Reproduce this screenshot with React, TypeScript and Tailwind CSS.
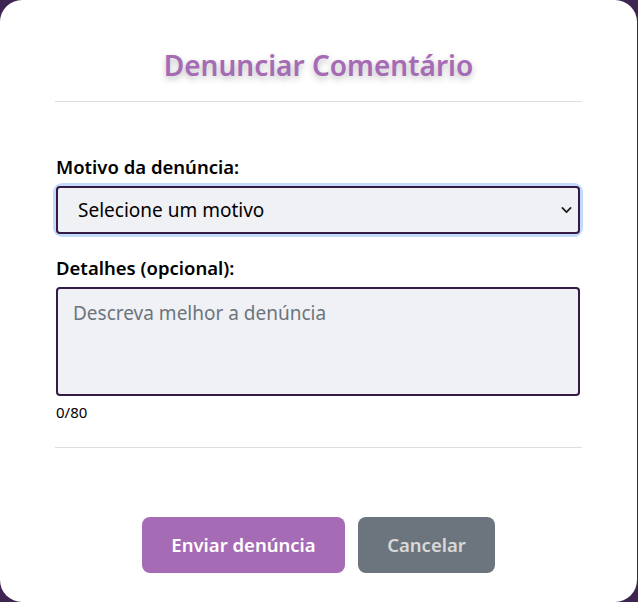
import React, { useState } from 'react';

const FONT = "font-['Segoe_UI','Noto_Sans','Open_Sans',sans-serif]";

export default function App() {
  const [details, setDetails] = useState('');

  return (
    <div className={`min-h-[602px] w-[638px] bg-[#3f2350] ${FONT}`}>
      <div className="flex h-[602px] w-[637px] flex-col rounded-[22px] bg-white px-[55px]">
        <h2 className="mt-[47px] text-center text-[28px] font-semibold leading-[36px] text-[#a66bb5] [text-shadow:0_3px_6px_rgba(0,0,0,0.25)]">
          Denunciar Comentário
        </h2>
        <div className="mt-[18px] h-px bg-[#dedede]" />

        <div className="flex flex-col pl-px pr-[2px]">
          <label className="mt-[52px] text-[18.5px] font-semibold leading-[26px] text-black">
            Motivo da denúncia:
          </label>
          <div className="mt-[6px] rounded-[6px] ring-[3px] ring-[#c2dbfd]">
            <div className="relative">
              <select className="h-[48px] w-full appearance-none rounded-[4px] border-2 border-[#361a46] bg-[#f0f1f5] pl-[20px] pr-10 text-[19px] text-black outline-none">
                <option>Selecione um motivo</option>
                <option>Spam</option>
                <option>Conteúdo ofensivo</option>
              </select>
              <svg
                className="pointer-events-none absolute right-[8px] top-1/2 -translate-y-1/2"
                width="11"
                height="11"
                viewBox="0 0 16 16"
                fill="none"
                stroke="#222"
                strokeWidth="2.6"
                strokeLinecap="round"
                strokeLinejoin="round"
              >
                <path d="M2 5l6 6 6-6" />
              </svg>
            </div>
          </div>

          <label className="mt-[21px] text-[18.5px] font-semibold leading-[26px] text-black">
            Detalhes (opcional):
          </label>
          <textarea
            value={details}
            maxLength={80}
            onChange={(e) => setDetails(e.target.value)}
            placeholder="Descreva melhor a denúncia"
            className="mt-[6px] h-[109px] w-full resize-none rounded-[4px] border-2 border-[#361a46] bg-[#f0f1f5] px-[15px] py-[11px] text-[19px] leading-[26px] text-black outline-none placeholder:text-[#6c757d]"
          />
          <span className="mt-[6px] text-[15px] leading-[20px] text-black">{details.length}/80</span>
        </div>
        <div className="mt-[25px] h-px bg-[#dedede]" />

        <div className="mt-[69px] flex justify-center gap-[13px]">
          <button className="h-[56px] w-[203px] rounded-[8px] bg-[#a66bb5] text-[18.5px] font-semibold text-white">
            Enviar denúncia
          </button>
          <button className="h-[56px] w-[137px] rounded-[8px] bg-[#6c757d] text-[18.5px] font-semibold text-[#d9d9d9]">
            Cancelar
          </button>
        </div>
      </div>
    </div>
  );
}
